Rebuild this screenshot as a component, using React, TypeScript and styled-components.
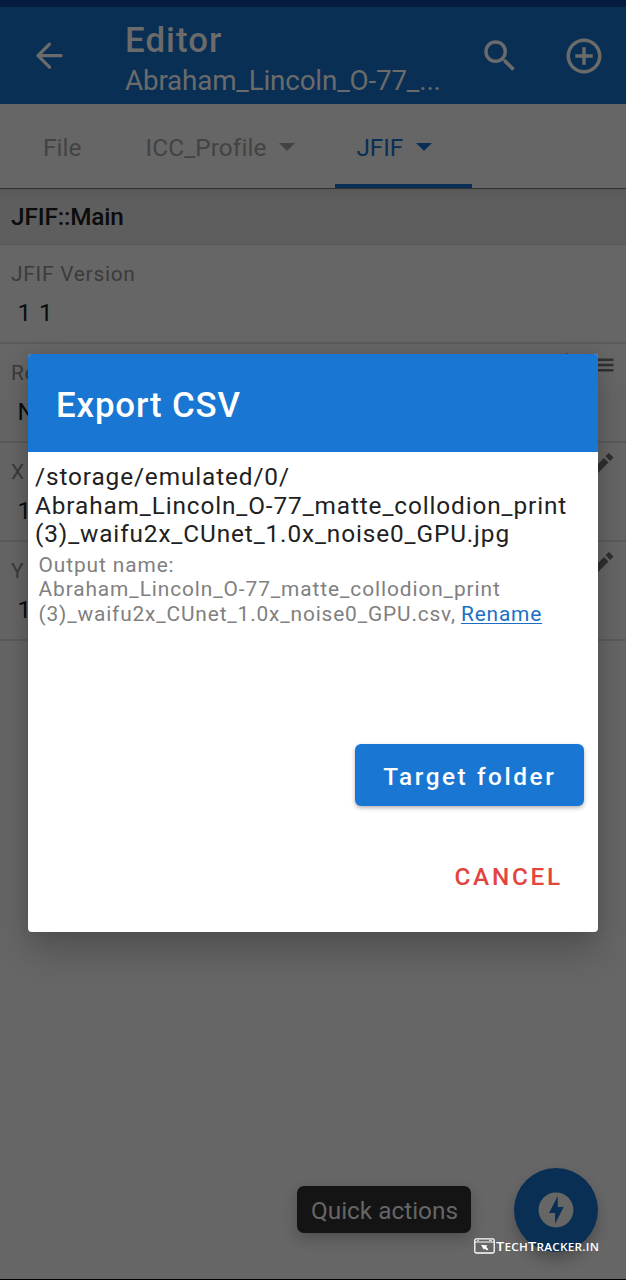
import React from 'react';
import styled, { createGlobalStyle } from 'styled-components';
import { MdSearch, MdAddCircleOutline, MdOfflineBolt } from 'react-icons/md';

const GlobalStyle = createGlobalStyle`
  * { box-sizing: border-box; }
  body { margin: 0; font-family: Roboto, sans-serif; background: #666; }
`;

const Screen = styled.div`
  position: relative;
  width: 626px;
  height: 1280px;
  overflow: hidden;
  background: #666;
  border-bottom: 1px solid #000;
`;

const StatusBar = styled.div`
  height: 7px;
  background: #051c40;
`;

const AppBar = styled.header`
  display: flex;
  align-items: center;
  height: 97px;
  padding: 0 21px 0 33px;
  background: #0a2f54;
  color: #6b6b6b;
`;

const Titles = styled.div`
  flex: 1;
  margin-left: 60px;
  padding-top: 5px;
`;

const Title = styled.h1`
  margin: 0;
  font-size: 34.8px;
  font-weight: 500;
  line-height: 41px;
  letter-spacing: 1.05px;
`;

const Subtitle = styled.div`
  margin-top: 3px;
  font-size: 27.8px;
  line-height: 33px;
  letter-spacing: -0.17px;
  white-space: nowrap;
`;

const Actions = styled.div`
  display: flex;
  gap: 42px;
`;

const Tabs = styled.nav`
  display: flex;
  height: 85px;
  padding-left: 22px;
  border-bottom: 1px solid #2f3030;
`;

const Tab = styled.div<{ $active?: boolean; $spacing?: number; $end?: number }>`
  display: flex;
  align-items: center;
  gap: 13px;
  height: 84px;
  padding: 2px ${(p) => p.$end ?? 40}px 0 21px;
  font-size: 24.35px;
  letter-spacing: ${(p) => p.$spacing ?? 0}px;
  color: ${(p) => (p.$active ? '#0a2f54' : '#434343')};
  box-shadow: ${(p) => (p.$active ? 'inset 0 -4px #0a2f54' : 'none')};
`;

const Caret = styled.span`
  border: 8px solid transparent;
  border-top-color: currentColor;
  border-bottom: 0;
`;

const SectionHeader = styled.div`
  display: flex;
  align-items: center;
  height: 56px;
  padding: 0 11px;
  background: linear-gradient(#595959, #5e5e5e 10px);
  border-bottom: 1px solid #575757;
  font-size: 24.35px;
  font-weight: 500;
  letter-spacing: -0.15px;
  color: #0c0c0c;
`;

const Entry = styled.div`
  display: flex;
  justify-content: space-between;
  height: 99px;
  padding: 17px 10px 0 11px;
  border-bottom: 2px solid #5b5b5b;
`;

const EntryLabel = styled.div`
  font-size: 20.87px;
  line-height: 24.5px;
  letter-spacing: 0.75px;
  color: #3b3b3b;
`;

const EntryValue = styled.div`
  margin: 12px 0 0 6.6px;
  font-size: 24.35px;
  line-height: 28.5px;
  letter-spacing: 0.87px;
  color: #0c0c0c;
`;

const EntryIcons = styled.div`
  display: flex;
  gap: 10px;
  margin-top: -10px;
  color: #303030;
`;

const Dialog = styled.section`
  position: absolute;
  left: 28px;
  top: 354px;
  display: flex;
  flex-direction: column;
  width: 570px;
  height: 578px;
  overflow: hidden;
  border-radius: 4px;
  background: #fff;
`;

const DialogShadow = styled.div`
  position: absolute;
  left: 28px;
  top: 354px;
  width: 570px;
  height: 578px;
  border-radius: 4px;
  box-shadow: 0 18px 36px rgba(0, 0, 0, 0.22), 0 0 14px rgba(0, 0, 0, 0.08);
`;

const DialogTitle = styled.h2`
  display: flex;
  align-items: center;
  height: 98px;
  margin: 0;
  padding: 3px 28px 0;
  background: #1976d2;
  color: #fff;
  font-size: 34.8px;
  font-weight: 500;
  letter-spacing: 0.88px;
`;

const DialogBody = styled.div`
  flex: 1;
  padding: 11px 7px 0;
`;

const FilePath = styled.div`
  font-size: 24.35px;
  line-height: 28.6px;
  letter-spacing: 0.89px;
  white-space: pre;
  color: #212121;
`;

const OutputName = styled.div`
  margin: 4px 0 0 3.5px;
  font-size: 20.87px;
  line-height: 24.46px;
  letter-spacing: 0.91px;
  color: #808080;
`;

const OutputLine = styled.div<{ $spacing?: number }>`
  display: flex;
  gap: 5px;
  letter-spacing: ${(p) => p.$spacing ?? 0.91}px;
  white-space: nowrap;
`;

const RenameLink = styled.a`
  color: #1b6fc4;
  text-decoration: underline;
  text-decoration-thickness: 1px;
  text-underline-offset: 2px;
`;

const DialogActions = styled.div`
  display: flex;
  flex-direction: column;
  align-items: flex-end;
  gap: 35px;
  padding: 0 14px 21px 0;
`;

const PrimaryButton = styled.button`
  width: 229.5px;
  height: 62px;
  border: 0;
  padding: 2px 0 0 1px;
  border-radius: 6px;
  background: #1976d2;
  color: #fff;
  font: 500 24.35px Roboto, sans-serif;
  letter-spacing: 2.57px;
  box-shadow: 0 2px 4px rgba(0, 0, 0, 0.3);
`;

const TextButton = styled.button`
  height: 70px;
  border: 0;
  padding: 0 21px;
  background: none;
  color: #e2453e;
  font: 500 24.35px Roboto, sans-serif;
  letter-spacing: 2.75px;
`;

const Tooltip = styled.div`
  position: absolute;
  left: 297px;
  top: 1186px;
  width: 174px;
  height: 47px;
  padding: 2px 0 0 14px;
  border-radius: 7px;
  background: #141414;
  color: #666;
  font-size: 24.35px;
  line-height: 46px;
  box-shadow: 0 6px 14px rgba(0, 0, 0, 0.22);
`;

const Fab = styled.div`
  position: absolute;
  left: 514px;
  top: 1168px;
  display: flex;
  align-items: center;
  justify-content: center;
  width: 84px;
  height: 84px;
  border-radius: 50%;
  background: #0a2f54;
  color: #666;
  box-shadow: 0 8px 14px rgba(0, 0, 0, 0.24);
`;

const Watermark = styled.div`
  position: absolute;
  left: 474px;
  top: 1237px;
  display: flex;
  align-items: center;
  gap: 1px;
  height: 18px;
  color: #fff;
`;

const Brand = styled.span`
  padding-top: 2px;
  font: 600 9.8px/18px 'Open Sans', sans-serif;
  letter-spacing: 0.2px;
  text-transform: uppercase;
  white-space: nowrap;
  transform: scaleX(1.2);
  transform-origin: 0 50%;

  b {
    font-size: 12.2px;
    font-weight: 600;
  }
`;

const BackIcon = () => (
  <svg width="32" height="32" viewBox="0 0 32 32" fill="none" stroke="currentColor" strokeWidth="3.3" strokeLinecap="round" strokeLinejoin="round">
    <path d="M28 15.7H5M16.5 4.2 5 15.7l11.5 11.5" />
  </svg>
);

const PencilIcon = () => (
  <svg width="26" height="26" viewBox="0 0 26 26" fill="currentColor">
    <path d="M15.5 6 19 3l4.5 4.5L20 11ZM14 8l4.5 4.5L8 23H3.5v-4.5Z" />
  </svg>
);

const LinesIcon = () => (
  <svg width="26" height="26" viewBox="0 0 26 26" stroke="currentColor" strokeWidth="2.6">
    <path d="M3.5 8.8h20M3.5 14h20M3.5 19.3h20" />
  </svg>
);

const CircleIcon = () => (
  <svg width="26" height="26" viewBox="0 0 26 26" fill="currentColor">
    <circle cx="13" cy="12" r="9.5" />
  </svg>
);

const BrandIcon = () => (
  <svg width="21" height="16" viewBox="0 0 21 16" fill="none" stroke="currentColor">
    <rect x="0.8" y="0.8" width="19.4" height="14.2" rx="1.5" strokeWidth="1.3" />
    <path d="M1 4h19" strokeWidth="1" />
    <path d="M3 2.4h2M15 2.4h3" strokeWidth="0.8" />
    <path d="M7 6.8 13.6 7.6 12.2 9 14.4 11.2 12.8 12.4 10.8 10.4 9.8 11.8Z" fill="currentColor" stroke="none" />
  </svg>
);

export default function App() {
  return (
    <>
      <GlobalStyle />
      <Screen>
        <StatusBar />
        <AppBar>
          <BackIcon />
          <Titles>
            <Title>Editor</Title>
            <Subtitle>Abraham_Lincoln_O-77_...</Subtitle>
          </Titles>
          <Actions>
            <MdSearch size={42} />
            <MdAddCircleOutline size={42} />
          </Actions>
        </AppBar>
        <Tabs>
          <Tab $spacing={0.1} $end={43}>File</Tab>
          <Tab $spacing={0.1}>ICC_Profile <Caret /></Tab>
          <Tab $active $spacing={-0.1}>JFIF <Caret /></Tab>
        </Tabs>
        <SectionHeader>JFIF::Main</SectionHeader>
        <Entry>
          <div>
            <EntryLabel>JFIF Version</EntryLabel>
            <EntryValue>1 1</EntryValue>
          </div>
        </Entry>
        <Entry>
          <div>
            <EntryLabel>Re</EntryLabel>
            <EntryValue>N</EntryValue>
          </div>
          <EntryIcons>
            <CircleIcon />
            <LinesIcon />
          </EntryIcons>
        </Entry>
        <Entry>
          <div>
            <EntryLabel>X</EntryLabel>
            <EntryValue>1</EntryValue>
          </div>
          <EntryIcons><PencilIcon /></EntryIcons>
        </Entry>
        <Entry>
          <div>
            <EntryLabel>Y</EntryLabel>
            <EntryValue>1</EntryValue>
          </div>
          <EntryIcons><PencilIcon /></EntryIcons>
        </Entry>

        <Tooltip>Quick actions</Tooltip>
        <Fab><MdOfflineBolt size={42} /></Fab>

        <DialogShadow />
        <Dialog>
          <DialogTitle>Export CSV</DialogTitle>
          <DialogBody>
            <FilePath>{'/storage/emulated/0/\nAbraham_Lincoln_O-77_matte_collodion_print\n(3)_waifu2x_CUnet_1.0x_noise0_GPU.jpg'}</FilePath>
            <OutputName>
              <OutputLine>Output name:</OutputLine>
              <OutputLine>Abraham_Lincoln_O-77_matte_collodion_print</OutputLine>
              <OutputLine $spacing={0.85}>
                <span>(3)_waifu2x_CUnet_1.0x_noise0_GPU.csv,</span>
                <RenameLink>Rename</RenameLink>
              </OutputLine>
            </OutputName>
          </DialogBody>
          <DialogActions>
            <PrimaryButton>Target folder</PrimaryButton>
            <TextButton>CANCEL</TextButton>
          </DialogActions>
        </Dialog>

        <Watermark>
          <BrandIcon />
          <Brand><b>T</b>ech<b>T</b>racker.in</Brand>
        </Watermark>
      </Screen>
    </>
  );
}
